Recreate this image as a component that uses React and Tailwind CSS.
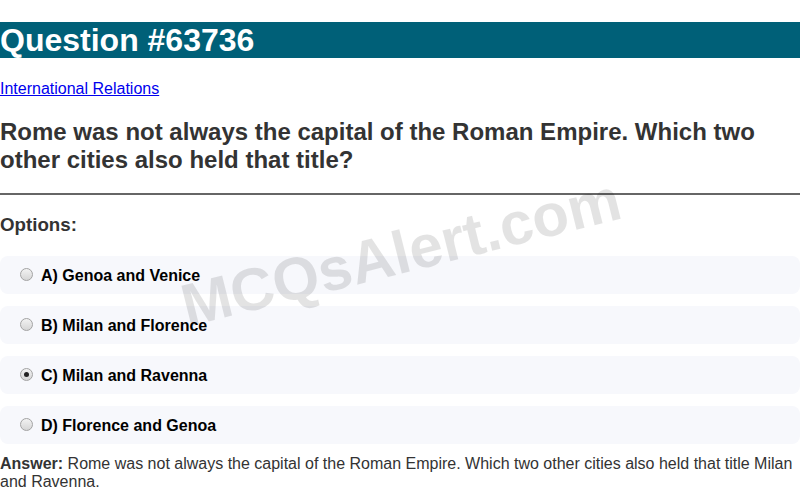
import React from "react";

function Radio({ checked }) {
  return (
    <span className="relative top-[-0.5px] inline-flex h-[13px] w-[13px] shrink-0 items-center justify-center rounded-full border border-[#a3a3a3] bg-gradient-to-b from-[#f2f2f2] to-[#d6d6d6]">
      {checked && <span className="h-[5px] w-[5px] rounded-full bg-[#222]" />}
    </span>
  );
}

const options = [
  { label: "A) Genoa and Venice", checked: false },
  { label: "B) Milan and Florence", checked: false },
  { label: "C) Milan and Ravenna", checked: true },
  { label: "D) Florence and Genoa", checked: false },
];

export default function App() {
  return (
    <div className="relative w-[800px] h-[492px] overflow-hidden bg-white font-['Liberation_Sans',Arial,sans-serif]">
      <h1 className="mt-[21.5px] bg-[#006078] text-white text-[32px] font-bold leading-[36.8px]">
        Question #63736
      </h1>
      <p className="mt-[21.5px] text-[16px] leading-[18.4px]">
        <a href="#" className="text-[#0000ee] underline">International Relations</a>
      </p>
      <h2 className="mt-[20px] text-[24px] font-bold leading-[27.6px] text-[#333]">
        Rome was not always the capital of the Roman Empire. Which two other cities also held that title?
      </h2>
      <hr className="mt-[20px] border-0 border-t-2 border-[#666]" />
      <h3 className="mt-[19px] text-[18.72px] font-bold leading-[21.5px] text-[#333]">Options:</h3>
      <div className="mt-[20px] flex flex-col gap-[12px]">
        {options.map((o) => (
          <div key={o.label} className="flex h-[38px] items-center gap-[8px] rounded-[8px] bg-[#f7f8fc] pl-[20px]">
            <Radio checked={o.checked} />
            <span className="relative top-[1.5px] text-[16px] font-bold leading-[18.4px] text-black">{o.label}</span>
          </div>
        ))}
      </div>
      <p className="mt-[11.5px] text-[16px] leading-[18px] text-[#333]">
        <strong>Answer:</strong> Rome was not always the capital of the Roman Empire. Which two other cities also held that title Milan and Ravenna.
      </p>
      <div className="pointer-events-none absolute left-[401px] top-[253px] -translate-x-1/2 -translate-y-1/2 -rotate-[14deg] whitespace-nowrap text-[60px] font-bold text-[rgba(0,0,0,0.11)]">
        MCQsAlert.com
      </div>
    </div>
  );
}
